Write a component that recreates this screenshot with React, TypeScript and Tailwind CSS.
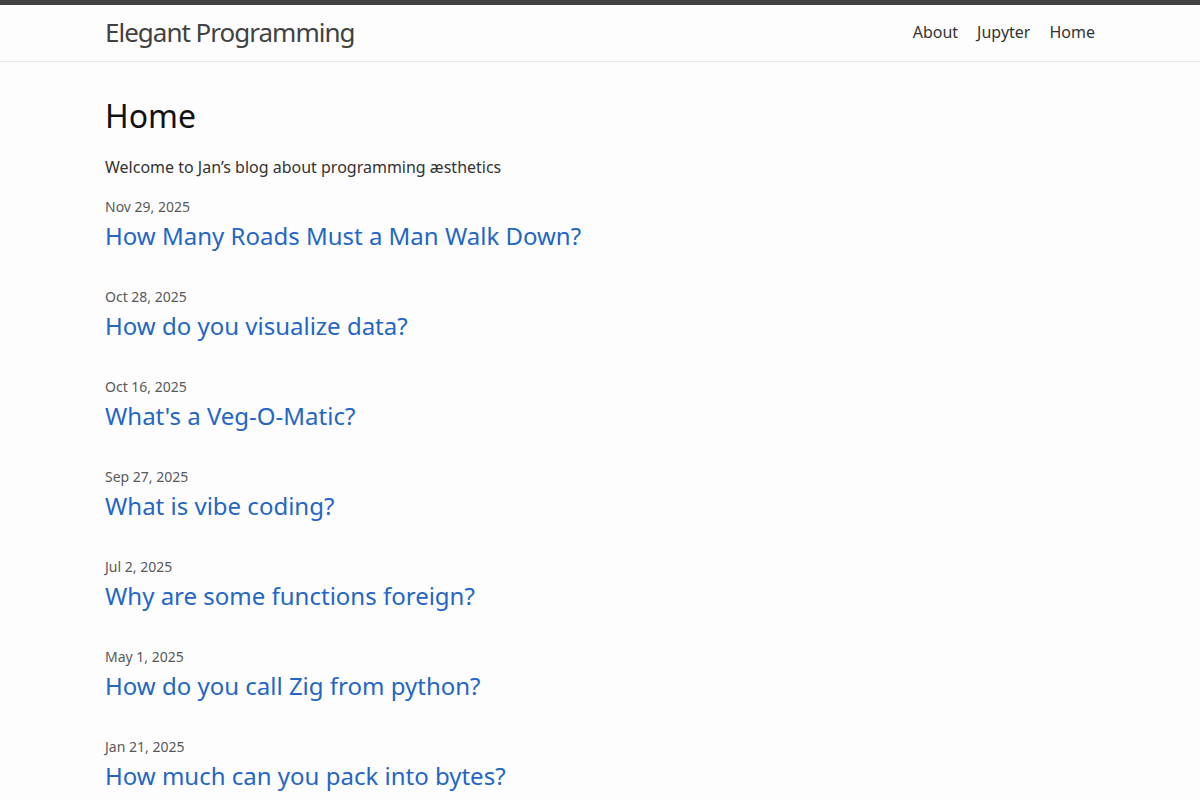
import React from 'react';

const posts = [
  { date: 'Nov 29, 2025', title: 'How Many Roads Must a Man Walk Down?' },
  { date: 'Oct 28, 2025', title: 'How do you visualize data?' },
  { date: 'Oct 16, 2025', title: "What's a Veg-O-Matic?" },
  { date: 'Sep 27, 2025', title: 'What is vibe coding?' },
  { date: 'Jul 2, 2025', title: 'Why are some functions foreign?' },
  { date: 'May 1, 2025', title: 'How do you call Zig from python?' },
  { date: 'Jan 21, 2025', title: 'How much can you pack into bytes?' },
];

const App: React.FC = () => {
  return (
    <div className="min-h-screen bg-[#fdfdfd] text-[#111] text-base leading-6 font-['Noto_Sans','Open_Sans',sans-serif]">
      {/* Site header */}
      <header className="border-t-[5px] border-t-[#424242] border-b border-b-[#e8e8e8]">
        <div className="max-w-[1020px] mx-auto px-[15px] pb-[2px] flex items-center justify-between">
          <a href="#" className="text-[26px] leading-[54px] tracking-[-1px] text-[#424242]">
            Elegant Programming
          </a>
          <nav className="flex gap-[19px] text-[#333] leading-[54px]">
            <a href="#">About</a>
            <a href="#">Jupyter</a>
            <a href="#">Home</a>
          </nav>
        </div>
      </header>

      <main className="max-w-[1020px] mx-auto px-[15px] pt-[30px]">
        <h1 className="text-[32px] leading-[48px] mb-[15px]">Home</h1>
        <p className="text-[#333] mb-[16px]">Welcome to Jan’s blog about programming æsthetics</p>

        <ul>
          {posts.map((post) => (
            <li key={post.date} className="mb-[33px]">
              <div className="text-sm leading-6 text-[#595959]">{post.date}</div>
              <h3 className="text-2xl leading-[33px]">
                <a href="#" className="text-[#2466c6]">
                  {post.title}
                </a>
              </h3>
            </li>
          ))}
        </ul>
      </main>
    </div>
  );
};

export default App;
